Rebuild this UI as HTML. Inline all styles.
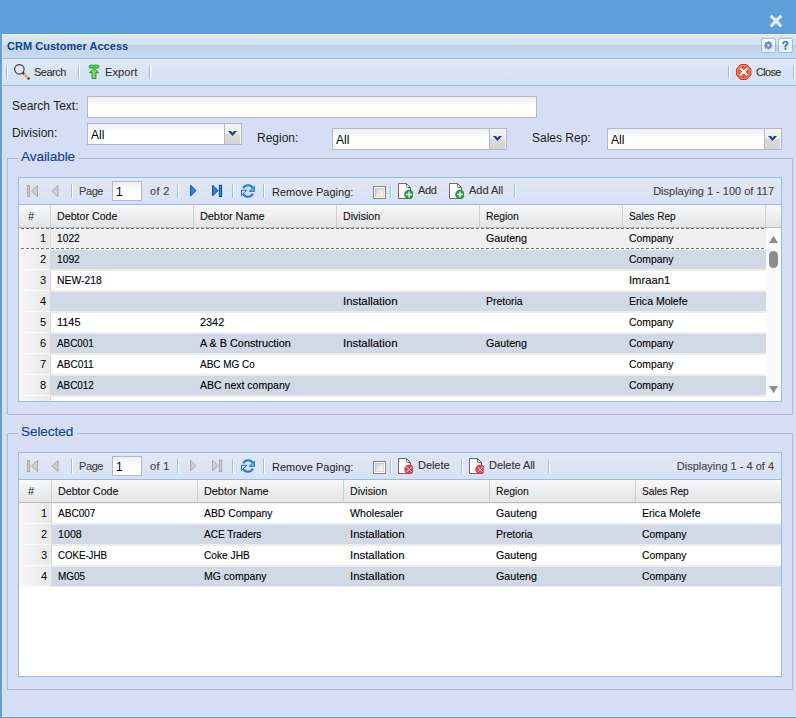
<!DOCTYPE html><html><head><meta charset="utf-8"><style>
html,body{margin:0;padding:0}
body{width:796px;height:718px;overflow:hidden;position:relative;background:#5fa0dc;font-family:"Liberation Sans",sans-serif}
div{position:absolute;box-sizing:border-box}
.t{white-space:pre;line-height:20px;height:20px}
.s{-webkit-text-stroke:0.12px currentColor}
</style></head><body>
<svg style="position:absolute;left:770px;top:15px" width="12" height="12" viewBox="0 0 12 12"><path d="M1.7 1.7L10.3 10.3M10.3 1.7L1.7 10.3" stroke="#e4eef8" stroke-width="3.1" stroke-linecap="round"/></svg>
<div style="left:2px;top:33px;width:794px;height:1px;background:#5796d8"></div>
<div style="left:2px;top:34px;width:794px;height:1px;background:#f4f8fc"></div>
<div style="left:2px;top:35px;width:794px;height:10px;background:linear-gradient(#dae6f4,#d3e1f2)"></div>
<div style="left:2px;top:45px;width:794px;height:1px;background:#bcd1ec"></div>
<div style="left:2px;top:46px;width:794px;height:12px;background:linear-gradient(#c2d5ee,#c8daf0)"></div>
<div style="left:2px;top:58px;width:794px;height:1px;background:#99bbe8"></div>
<div style="left:2px;top:59px;width:794px;height:26px;background:linear-gradient(#dfe8f5,#d5e2f2)"></div>
<div style="left:2px;top:85px;width:794px;height:1px;background:#99bbe8"></div>
<div style="left:2px;top:86px;width:794px;height:631px;background:#d6def5"></div>
<div style="left:2px;top:35px;width:1px;height:682px;background:#e0e6f8"></div>
<div style="left:2px;top:716px;width:794px;height:1px;background:#dde3f7"></div>
<div class="t" style="left:7px;top:36px;font-size:11px;color:#15428b;font-weight:bold;letter-spacing:0.03px;">CRM Customer Access</div>
<div style="left:761px;top:38px;width:15px;height:15px;border:1px solid #99bbe8;border-radius:2px;background:linear-gradient(#ffffff,#ffffff 45%,#dbe8f8 50%,#e8f1fb)"></div>
<div style="left:778px;top:38px;width:15px;height:15px;border:1px solid #99bbe8;border-radius:2px;background:linear-gradient(#ffffff,#ffffff 45%,#dbe8f8 50%,#e8f1fb)"></div>
<svg style="position:absolute;left:763px;top:40px" width="11" height="11" viewBox="0 0 11 11"><g fill="#7f87cd"><circle cx="5.3" cy="5.3" r="3.5"/><rect x="4.5" y="1.1" width="1.6" height="1.8" transform="rotate(0 5.3 5.3)"/><rect x="4.5" y="1.1" width="1.6" height="1.8" transform="rotate(45 5.3 5.3)"/><rect x="4.5" y="1.1" width="1.6" height="1.8" transform="rotate(90 5.3 5.3)"/><rect x="4.5" y="1.1" width="1.6" height="1.8" transform="rotate(135 5.3 5.3)"/><rect x="4.5" y="1.1" width="1.6" height="1.8" transform="rotate(180 5.3 5.3)"/><rect x="4.5" y="1.1" width="1.6" height="1.8" transform="rotate(225 5.3 5.3)"/><rect x="4.5" y="1.1" width="1.6" height="1.8" transform="rotate(270 5.3 5.3)"/><rect x="4.5" y="1.1" width="1.6" height="1.8" transform="rotate(315 5.3 5.3)"/></g><circle cx="5.3" cy="5.3" r="1.1" fill="#f4f6ff"/></svg>
<svg style="position:absolute;left:778px;top:38px" width="15" height="15" viewBox="0 0 15 15"><path d="M5.2 5.6Q5.2 3.6 7.4 3.6Q9.6 3.6 9.6 5.3Q9.6 6.3 8.5 6.9Q7.4 7.5 7.4 8.7" fill="none" stroke="#4b7bb3" stroke-width="1.9" stroke-linecap="round"/><circle cx="7.4" cy="10.9" r="1.05" fill="#4b7bb3"/></svg>
<div style="left:6px;top:65px;width:1px;height:14px;background:#98c0ec"></div>
<div style="left:7px;top:65px;width:1px;height:14px;background:#ffffff"></div>
<div style="left:78px;top:65px;width:1px;height:14px;background:#98c0ec"></div>
<div style="left:79px;top:65px;width:1px;height:14px;background:#ffffff"></div>
<div style="left:149px;top:65px;width:1px;height:14px;background:#98c0ec"></div>
<div style="left:150px;top:65px;width:1px;height:14px;background:#ffffff"></div>
<div style="left:728px;top:65px;width:1px;height:14px;background:#98c0ec"></div>
<div style="left:729px;top:65px;width:1px;height:14px;background:#ffffff"></div>
<div style="left:793px;top:65px;width:1px;height:14px;background:#98c0ec"></div>
<div style="left:794px;top:65px;width:1px;height:14px;background:#ffffff"></div>
<svg style="position:absolute;left:14px;top:64px" width="16" height="16" viewBox="0 0 16 16"><circle cx="5.4" cy="5.3" r="4.75" fill="#e5e7eb" stroke="#36466f" stroke-width="1.2"/><path d="M8.6 8.6L10.3 10.3" stroke="#36466f" stroke-width="2.4"/><path d="M10.1 10.1L14.2 14.2" stroke="#e8b466" stroke-width="2.8"/><path d="M14 14L15.2 15.2" stroke="#36466f" stroke-width="2.6"/></svg>
<div class="t s" style="left:34px;top:62px;font-size:11px;color:#333;font-weight:normal;letter-spacing:-0.5px;">Search</div>
<svg style="position:absolute;left:86px;top:64px" width="16" height="16" viewBox="0 0 16 16"><rect x="3.2" y="1.2" width="9.6" height="2.8" rx="1.2" fill="#5ccc5c" stroke="#239a23" stroke-width="1"/><path d="M8 4.6L12.6 8.6H9.9V14.4H6.1V8.6H3.4Z" fill="#78dc78" stroke="#239a23" stroke-width="1" stroke-linejoin="round"/></svg>
<div class="t s" style="left:105px;top:62px;font-size:11px;color:#333;font-weight:normal;letter-spacing:0.1px;">Export</div>
<svg style="position:absolute;left:736px;top:64px" width="16" height="16" viewBox="0 0 16 16"><path d="M4.6 0.5H10.4L15 5.1V10.9L10.4 15.5H4.6L0.5 10.9V5.1Z" fill="#e9583c" stroke="#c8401f" stroke-width="1"/><path d="M5 1.6H10L13.9 5.5V10.5L10 14.4H5L1.6 10.5V5.5Z" fill="none" stroke="#f7927a" stroke-width="0.9"/><path d="M4.9 4.9L10.6 10.6M10.6 4.9L4.9 10.6" stroke="#fff" stroke-width="2.1" stroke-linecap="square"/></svg>
<div class="t s" style="left:756px;top:62px;font-size:11px;color:#333;font-weight:normal;letter-spacing:-0.7px;">Close</div>
<div class="t" style="left:12px;top:96px;font-size:12px;color:#222;font-weight:normal;">Search Text:</div>
<div style="left:87px;top:96px;width:450px;height:22px;background:linear-gradient(#eceff0,#f7f8f8 5px,#fff 8px);border:1px solid #b5b8c8"></div>
<div class="t" style="left:12px;top:123px;font-size:12px;color:#222;font-weight:normal;">Division:</div>
<div style="left:87px;top:123px;width:155px;height:22px;background:linear-gradient(#eceff0,#f7f8f8 5px,#fff 8px);border:1px solid #b5b8c8"></div>
<div style="left:224px;top:123px;width:18px;height:22px;border:1px solid #b5b8c8;background:linear-gradient(#f3f3f3,#ececec 45%,#dadada 55%,#d4d4d4);border-radius:0 2px 2px 0"></div>
<div style="left:240px;top:124px;width:1px;height:20px;background:#f7f7f7"></div>
<svg style="position:absolute;left:228px;top:131px" width="9" height="6" viewBox="0 0 9 6"><path d="M0 0H3L4.5 2L6 0H9L4.5 5Z" fill="#1f3e87"/></svg>
<div class="t" style="left:91px;top:125px;font-size:12px;color:#000;font-weight:normal;">All</div>
<div class="t" style="left:257px;top:128px;font-size:12px;color:#222;font-weight:normal;">Region:</div>
<div style="left:332px;top:128px;width:175px;height:22px;background:linear-gradient(#eceff0,#f7f8f8 5px,#fff 8px);border:1px solid #b5b8c8"></div>
<div style="left:489px;top:128px;width:18px;height:22px;border:1px solid #b5b8c8;background:linear-gradient(#f3f3f3,#ececec 45%,#dadada 55%,#d4d4d4);border-radius:0 2px 2px 0"></div>
<div style="left:505px;top:129px;width:1px;height:20px;background:#f7f7f7"></div>
<svg style="position:absolute;left:493px;top:136px" width="9" height="6" viewBox="0 0 9 6"><path d="M0 0H3L4.5 2L6 0H9L4.5 5Z" fill="#1f3e87"/></svg>
<div class="t" style="left:336px;top:130px;font-size:12px;color:#000;font-weight:normal;">All</div>
<div class="t" style="left:532px;top:128px;font-size:12px;color:#222;font-weight:normal;">Sales Rep:</div>
<div style="left:607px;top:128px;width:175px;height:22px;background:linear-gradient(#eceff0,#f7f8f8 5px,#fff 8px);border:1px solid #b5b8c8"></div>
<div style="left:764px;top:128px;width:18px;height:22px;border:1px solid #b5b8c8;background:linear-gradient(#f3f3f3,#ececec 45%,#dadada 55%,#d4d4d4);border-radius:0 2px 2px 0"></div>
<div style="left:780px;top:129px;width:1px;height:20px;background:#f7f7f7"></div>
<svg style="position:absolute;left:768px;top:136px" width="9" height="6" viewBox="0 0 9 6"><path d="M0 0H3L4.5 2L6 0H9L4.5 5Z" fill="#1f3e87"/></svg>
<div class="t" style="left:611px;top:130px;font-size:12px;color:#000;font-weight:normal;">All</div>
<div style="left:7px;top:158px;width:786px;height:257px;border:1px solid #b5b8c8;border-top:none"></div>
<div style="left:7px;top:158px;width:11px;height:1px;background:#b5b8c8"></div>
<div style="left:78px;top:158px;width:715px;height:1px;background:#b5b8c8"></div>
<div style="left:7px;top:158px;width:1px;height:1px;background:#b5b8c8"></div>
<div class="t s" style="left:21px;top:147px;font-size:13.6px;color:#15428b;font-weight:normal;letter-spacing:-0.1px;">Available</div>
<div style="left:18px;top:177px;width:764px;height:28px;border:1px solid #99bbe8;background:linear-gradient(#dfe8f6,#d6e2f3)"></div>
<svg style="position:absolute;left:27px;top:185px" width="12" height="12" viewBox="0 0 12 12"><rect x="0.5" y="0.5" width="2" height="11" fill="#d0d0d0" stroke="#a9a9a9" stroke-width="1"/><path d="M10.5 0.5V11.5L4.5 6Z" fill="#cfcfcf" stroke="#a9a9a9" stroke-width="1" stroke-linejoin="round"/></svg>
<svg style="position:absolute;left:51px;top:185px" width="8" height="12" viewBox="0 0 8 12"><path d="M7 0.5V11.5L1 6Z" fill="#cfcfcf" stroke="#a9a9a9" stroke-width="1" stroke-linejoin="round"/></svg>
<div style="left:71px;top:184px;width:1px;height:14px;background:#98c0ec"></div>
<div style="left:72px;top:184px;width:1px;height:14px;background:#ffffff"></div>
<div class="t s" style="left:79px;top:181px;font-size:11px;color:#444;font-weight:normal;letter-spacing:-0.4px;">Page</div>
<div style="left:112px;top:181px;width:30px;height:20px;background:linear-gradient(#eceff0,#f7f8f8 5px,#fff 8px);border:1px solid #b5b8c8"></div>
<div class="t" style="left:116px;top:182px;font-size:12px;color:#000;font-weight:normal;">1</div>
<div class="t s" style="left:150px;top:181px;font-size:11px;color:#444;font-weight:normal;letter-spacing:0.35px;">of 2</div>
<div style="left:177px;top:184px;width:1px;height:14px;background:#98c0ec"></div>
<div style="left:178px;top:184px;width:1px;height:14px;background:#ffffff"></div>
<svg style="position:absolute;left:189px;top:184px" width="8" height="13" viewBox="0 0 8 13"><path d="M1.6 1.2V11.9L7 6.6Z" fill="#3b7be6" stroke="#1546ae" stroke-width="1" stroke-linejoin="round"/></svg>
<svg style="position:absolute;left:211px;top:184px" width="12" height="13" viewBox="0 0 12 13"><path d="M1.6 1.2V11.9L7 6.6Z" fill="#3b7be6" stroke="#1546ae" stroke-width="1" stroke-linejoin="round"/><rect x="8.4" y="1.3" width="2.2" height="11.2" fill="#3b7be6" stroke="#1546ae" stroke-width="1"/></svg>
<div style="left:232px;top:184px;width:1px;height:14px;background:#98c0ec"></div>
<div style="left:233px;top:184px;width:1px;height:14px;background:#ffffff"></div>
<svg style="position:absolute;left:240px;top:184px" width="16" height="16" viewBox="0 0 16 16"><path d="M3.2 4.4Q4.6 1.2 8 1.2Q11.2 1.2 12.6 3.8" fill="none" stroke="#2277e6" stroke-width="2.1"/><path d="M14.4 2.3V7.3H9.2Z" fill="#66b8fa" stroke="#1b6ad8" stroke-width="1" stroke-linejoin="round"/><path d="M12.8 9.6Q11.4 12.8 8 12.8Q4.8 12.8 3.4 10.2" fill="none" stroke="#2277e6" stroke-width="2.1"/><path d="M1.5 6.3V11.6L6.8 6.3Z" fill="#c2e4fd" stroke="#1b6ad8" stroke-width="1" stroke-linejoin="round"/></svg>
<div style="left:263px;top:184px;width:1px;height:14px;background:#98c0ec"></div>
<div style="left:264px;top:184px;width:1px;height:14px;background:#ffffff"></div>
<div class="t" style="left:272px;top:182px;font-size:11px;color:#222;font-weight:normal;">Remove Paging:</div>
<div style="left:373px;top:186px;width:13px;height:13px;border:1px solid #838383;background:#fff"></div>
<div style="left:375px;top:188px;width:9px;height:9px;border:1px solid #c3c7cf;border-right-color:#dcdcdc;border-bottom-color:#dcdcdc;background:linear-gradient(135deg,#c9cdd4,#eeeeef 60%,#f6f6f6)"></div>
<div style="left:390px;top:184px;width:1px;height:14px;background:#98c0ec"></div>
<div style="left:391px;top:184px;width:1px;height:14px;background:#ffffff"></div>
<svg style="position:absolute;left:397px;top:183px" width="16" height="16" viewBox="0 0 16 16"><path d="M1.5 0.5H9.5L13.5 4.5V15.5H1.5Z" fill="#fff" stroke="#6b6b6b" stroke-width="1"/><path d="M9.5 0.5V3.5Q9.5 4.5 10.5 4.5H13.5" fill="none" stroke="#6b6b6b" stroke-width="1"/><circle cx="12" cy="11.5" r="4.4" fill="#2e9a3e" stroke="#237a30" stroke-width="0.8"/><path d="M12 8.5V14.5M9 11.5H15" stroke="#fff" stroke-width="1.3"/></svg>
<div class="t s" style="left:418px;top:180px;font-size:11px;color:#333;font-weight:normal;letter-spacing:-0.3px;">Add</div>
<svg style="position:absolute;left:448px;top:183px" width="16" height="16" viewBox="0 0 16 16"><path d="M1.5 0.5H9.5L13.5 4.5V15.5H1.5Z" fill="#fff" stroke="#6b6b6b" stroke-width="1"/><path d="M9.5 0.5V3.5Q9.5 4.5 10.5 4.5H13.5" fill="none" stroke="#6b6b6b" stroke-width="1"/><circle cx="12" cy="11.5" r="4.4" fill="#2e9a3e" stroke="#237a30" stroke-width="0.8"/><path d="M12 8.5V14.5M9 11.5H15" stroke="#fff" stroke-width="1.3"/></svg>
<div class="t s" style="left:469px;top:180px;font-size:11px;color:#333;font-weight:normal;">Add All</div>
<div style="left:514px;top:184px;width:1px;height:14px;background:#98c0ec"></div>
<div style="left:515px;top:184px;width:1px;height:14px;background:#ffffff"></div>
<div class="t s" style="left:0px;top:181px;font-size:11px;color:#444;font-weight:normal;left:auto;right:22px">Displaying 1 - 100 of 117</div>
<div style="left:7px;top:433px;width:786px;height:257px;border:1px solid #b5b8c8;border-top:none"></div>
<div style="left:7px;top:433px;width:11px;height:1px;background:#b5b8c8"></div>
<div style="left:77px;top:433px;width:716px;height:1px;background:#b5b8c8"></div>
<div style="left:7px;top:433px;width:1px;height:1px;background:#b5b8c8"></div>
<div class="t s" style="left:21px;top:422px;font-size:13.6px;color:#15428b;font-weight:normal;letter-spacing:-0.1px;">Selected</div>
<div style="left:18px;top:452px;width:764px;height:28px;border:1px solid #99bbe8;background:linear-gradient(#dfe8f6,#d6e2f3)"></div>
<svg style="position:absolute;left:27px;top:460px" width="12" height="12" viewBox="0 0 12 12"><rect x="0.5" y="0.5" width="2" height="11" fill="#d0d0d0" stroke="#a9a9a9" stroke-width="1"/><path d="M10.5 0.5V11.5L4.5 6Z" fill="#cfcfcf" stroke="#a9a9a9" stroke-width="1" stroke-linejoin="round"/></svg>
<svg style="position:absolute;left:51px;top:460px" width="8" height="12" viewBox="0 0 8 12"><path d="M7 0.5V11.5L1 6Z" fill="#cfcfcf" stroke="#a9a9a9" stroke-width="1" stroke-linejoin="round"/></svg>
<div style="left:71px;top:459px;width:1px;height:14px;background:#98c0ec"></div>
<div style="left:72px;top:459px;width:1px;height:14px;background:#ffffff"></div>
<div class="t s" style="left:79px;top:456px;font-size:11px;color:#444;font-weight:normal;letter-spacing:-0.4px;">Page</div>
<div style="left:112px;top:456px;width:30px;height:20px;background:linear-gradient(#eceff0,#f7f8f8 5px,#fff 8px);border:1px solid #b5b8c8"></div>
<div class="t" style="left:116px;top:457px;font-size:12px;color:#000;font-weight:normal;">1</div>
<div class="t s" style="left:150px;top:456px;font-size:11px;color:#444;font-weight:normal;letter-spacing:0.35px;">of 1</div>
<div style="left:177px;top:459px;width:1px;height:14px;background:#98c0ec"></div>
<div style="left:178px;top:459px;width:1px;height:14px;background:#ffffff"></div>
<svg style="position:absolute;left:189px;top:459px" width="8" height="13" viewBox="0 0 8 13"><path d="M1.6 1.2V11.9L7 6.6Z" fill="#cfcfcf" stroke="#a9a9a9" stroke-width="1" stroke-linejoin="round"/></svg>
<svg style="position:absolute;left:211px;top:459px" width="12" height="13" viewBox="0 0 12 13"><path d="M1.6 1.2V11.9L7 6.6Z" fill="#cfcfcf" stroke="#a9a9a9" stroke-width="1" stroke-linejoin="round"/><rect x="8.4" y="1.3" width="2.2" height="11.2" fill="#d0d0d0" stroke="#a9a9a9" stroke-width="1"/></svg>
<div style="left:232px;top:459px;width:1px;height:14px;background:#98c0ec"></div>
<div style="left:233px;top:459px;width:1px;height:14px;background:#ffffff"></div>
<svg style="position:absolute;left:240px;top:459px" width="16" height="16" viewBox="0 0 16 16"><path d="M3.2 4.4Q4.6 1.2 8 1.2Q11.2 1.2 12.6 3.8" fill="none" stroke="#2277e6" stroke-width="2.1"/><path d="M14.4 2.3V7.3H9.2Z" fill="#66b8fa" stroke="#1b6ad8" stroke-width="1" stroke-linejoin="round"/><path d="M12.8 9.6Q11.4 12.8 8 12.8Q4.8 12.8 3.4 10.2" fill="none" stroke="#2277e6" stroke-width="2.1"/><path d="M1.5 6.3V11.6L6.8 6.3Z" fill="#c2e4fd" stroke="#1b6ad8" stroke-width="1" stroke-linejoin="round"/></svg>
<div style="left:263px;top:459px;width:1px;height:14px;background:#98c0ec"></div>
<div style="left:264px;top:459px;width:1px;height:14px;background:#ffffff"></div>
<div class="t" style="left:272px;top:457px;font-size:11px;color:#222;font-weight:normal;">Remove Paging:</div>
<div style="left:373px;top:461px;width:13px;height:13px;border:1px solid #838383;background:#fff"></div>
<div style="left:375px;top:463px;width:9px;height:9px;border:1px solid #c3c7cf;border-right-color:#dcdcdc;border-bottom-color:#dcdcdc;background:linear-gradient(135deg,#c9cdd4,#eeeeef 60%,#f6f6f6)"></div>
<div style="left:390px;top:459px;width:1px;height:14px;background:#98c0ec"></div>
<div style="left:391px;top:459px;width:1px;height:14px;background:#ffffff"></div>
<svg style="position:absolute;left:397px;top:458px" width="16" height="16" viewBox="0 0 16 16"><path d="M1.5 0.5H9.5L13.5 4.5V15.5H1.5Z" fill="#fff" stroke="#6b6b6b" stroke-width="1"/><path d="M9.5 0.5V3.5Q9.5 4.5 10.5 4.5H13.5" fill="none" stroke="#6b6b6b" stroke-width="1"/><circle cx="12.2" cy="11.5" r="4.5" fill="#ea4450" stroke="#c43242" stroke-width="0.8"/><path d="M10 9.3L14.4 13.7M14.4 9.3L10 13.7" stroke="#fff" stroke-width="1"/></svg>
<div class="t s" style="left:418px;top:455px;font-size:11px;color:#333;font-weight:normal;letter-spacing:-0.05px;">Delete</div>
<div style="left:461px;top:459px;width:1px;height:14px;background:#98c0ec"></div>
<div style="left:462px;top:459px;width:1px;height:14px;background:#ffffff"></div>
<svg style="position:absolute;left:468px;top:458px" width="16" height="16" viewBox="0 0 16 16"><path d="M1.5 0.5H9.5L13.5 4.5V15.5H1.5Z" fill="#fff" stroke="#6b6b6b" stroke-width="1"/><path d="M9.5 0.5V3.5Q9.5 4.5 10.5 4.5H13.5" fill="none" stroke="#6b6b6b" stroke-width="1"/><circle cx="12.2" cy="11.5" r="4.5" fill="#ea4450" stroke="#c43242" stroke-width="0.8"/><path d="M10 9.3L14.4 13.7M14.4 9.3L10 13.7" stroke="#fff" stroke-width="1"/></svg>
<div class="t s" style="left:489px;top:455px;font-size:11px;color:#333;font-weight:normal;letter-spacing:-0.05px;">Delete All</div>
<div style="left:548px;top:459px;width:1px;height:14px;background:#98c0ec"></div>
<div style="left:549px;top:459px;width:1px;height:14px;background:#ffffff"></div>
<div class="t s" style="left:0px;top:456px;font-size:11px;color:#444;font-weight:normal;left:auto;right:22px">Displaying 1 - 4 of 4</div>
<div style="left:18px;top:205px;width:1px;height:197px;background:#99bbe8"></div>
<div style="left:781px;top:205px;width:1px;height:197px;background:#99bbe8"></div>
<div style="left:18px;top:401px;width:764px;height:1px;background:#99bbe8"></div>
<div style="left:19px;top:228px;width:762px;height:173px;background:#fff"></div>
<div style="left:19px;top:205px;width:762px;height:23px;background:linear-gradient(#f9f9f9,#e3e4e6);border-bottom:1px solid #bdbdbd"></div>
<div class="t" style="left:28px;top:206px;font-size:11px;color:#222;font-weight:normal;">#</div>
<div class="t s" style="left:57px;top:206px;font-size:11px;color:#111;font-weight:normal;transform:scaleX(0.969);transform-origin:0 0;">Debtor Code</div>
<div class="t s" style="left:200px;top:206px;font-size:11px;color:#111;font-weight:normal;transform:scaleX(0.986);transform-origin:0 0;">Debtor Name</div>
<div class="t s" style="left:343px;top:206px;font-size:11px;color:#111;font-weight:normal;transform:scaleX(0.964);transform-origin:0 0;">Division</div>
<div class="t s" style="left:486px;top:206px;font-size:11px;color:#111;font-weight:normal;transform:scaleX(0.938);transform-origin:0 0;">Region</div>
<div class="t s" style="left:629px;top:206px;font-size:11px;color:#111;font-weight:normal;transform:scaleX(0.92);transform-origin:0 0;">Sales Rep</div>
<div style="left:50px;top:205px;width:1px;height:22px;background:#d0d0d0"></div>
<div style="left:193px;top:205px;width:1px;height:22px;background:#d0d0d0"></div>
<div style="left:336px;top:205px;width:1px;height:22px;background:#d0d0d0"></div>
<div style="left:479px;top:205px;width:1px;height:22px;background:#d0d0d0"></div>
<div style="left:622px;top:205px;width:1px;height:22px;background:#d0d0d0"></div>
<div style="left:765px;top:205px;width:1px;height:22px;background:#d0d0d0"></div>
<div style="left:0;top:0;width:796px;height:401px;overflow:hidden">
<div style="left:51px;top:228px;width:715px;height:21px;background:#efefef"></div>
<div style="left:51px;top:228px;width:715px;height:1px;background:#ededed"></div>
<div style="left:51px;top:248px;width:715px;height:1px;background:#ededed"></div>
<div style="left:19px;top:228px;width:31px;height:21px;background:linear-gradient(90deg,#f6f6f6,#e9e9e9)"></div>
<div style="left:19px;top:248px;width:31px;height:1px;background:#fafafa"></div>
<div style="left:50px;top:228px;width:1px;height:21px;background:#dcdcdc"></div>
<div class="t" style="left:0px;top:228px;font-size:11px;color:#000;font-weight:normal;width:46px;text-align:right">1</div>
<div class="t s" style="left:57px;top:228px;font-size:11px;color:#000;font-weight:normal;transform:scaleX(0.932);transform-origin:0 0;">1022</div>
<div class="t s" style="left:486px;top:228px;font-size:11px;color:#000;font-weight:normal;transform:scaleX(0.97);transform-origin:0 0;">Gauteng</div>
<div class="t s" style="left:629px;top:228px;font-size:11px;color:#000;font-weight:normal;transform:scaleX(0.942);transform-origin:0 0;">Company</div>
<div style="left:19px;top:228px;width:747px;height:1px;background:repeating-linear-gradient(90deg,#fbfbfb 0 2px,#747474 2px 5px)"></div>
<div style="left:19px;top:248px;width:747px;height:1px;background:repeating-linear-gradient(90deg,#fbfbfb 0 2px,#747474 2px 5px)"></div>
<div style="left:51px;top:249px;width:715px;height:21px;background:#d1d9e6"></div>
<div style="left:51px;top:249px;width:715px;height:1px;background:#ededed"></div>
<div style="left:51px;top:269px;width:715px;height:1px;background:#ededed"></div>
<div style="left:19px;top:249px;width:31px;height:21px;background:linear-gradient(90deg,#f6f6f6,#e9e9e9)"></div>
<div style="left:19px;top:269px;width:31px;height:1px;background:#fafafa"></div>
<div style="left:50px;top:249px;width:1px;height:21px;background:#dcdcdc"></div>
<div class="t" style="left:0px;top:249px;font-size:11px;color:#000;font-weight:normal;width:46px;text-align:right">2</div>
<div class="t s" style="left:57px;top:249px;font-size:11px;color:#000;font-weight:normal;transform:scaleX(0.932);transform-origin:0 0;">1092</div>
<div class="t s" style="left:629px;top:249px;font-size:11px;color:#000;font-weight:normal;transform:scaleX(0.942);transform-origin:0 0;">Company</div>
<div style="left:51px;top:270px;width:715px;height:21px;background:#ffffff"></div>
<div style="left:51px;top:270px;width:715px;height:1px;background:#ededed"></div>
<div style="left:51px;top:290px;width:715px;height:1px;background:#ededed"></div>
<div style="left:19px;top:270px;width:31px;height:21px;background:linear-gradient(90deg,#f6f6f6,#e9e9e9)"></div>
<div style="left:19px;top:290px;width:31px;height:1px;background:#fafafa"></div>
<div style="left:50px;top:270px;width:1px;height:21px;background:#dcdcdc"></div>
<div class="t" style="left:0px;top:270px;font-size:11px;color:#000;font-weight:normal;width:46px;text-align:right">3</div>
<div class="t s" style="left:57px;top:270px;font-size:11px;color:#000;font-weight:normal;transform:scaleX(0.944);transform-origin:0 0;">NEW-218</div>
<div class="t s" style="left:629px;top:270px;font-size:11px;color:#000;font-weight:normal;transform:scaleX(1.019);transform-origin:0 0;">Imraan1</div>
<div style="left:51px;top:291px;width:715px;height:21px;background:#d1d9e6"></div>
<div style="left:51px;top:291px;width:715px;height:1px;background:#ededed"></div>
<div style="left:51px;top:311px;width:715px;height:1px;background:#ededed"></div>
<div style="left:19px;top:291px;width:31px;height:21px;background:linear-gradient(90deg,#f6f6f6,#e9e9e9)"></div>
<div style="left:19px;top:311px;width:31px;height:1px;background:#fafafa"></div>
<div style="left:50px;top:291px;width:1px;height:21px;background:#dcdcdc"></div>
<div class="t" style="left:0px;top:291px;font-size:11px;color:#000;font-weight:normal;width:46px;text-align:right">4</div>
<div class="t s" style="left:343px;top:291px;font-size:11px;color:#000;font-weight:normal;transform:scaleX(1.036);transform-origin:0 0;">Installation</div>
<div class="t s" style="left:486px;top:291px;font-size:11px;color:#000;font-weight:normal;transform:scaleX(0.952);transform-origin:0 0;">Pretoria</div>
<div class="t s" style="left:629px;top:291px;font-size:11px;color:#000;font-weight:normal;transform:scaleX(0.957);transform-origin:0 0;">Erica Molefe</div>
<div style="left:51px;top:312px;width:715px;height:21px;background:#ffffff"></div>
<div style="left:51px;top:312px;width:715px;height:1px;background:#ededed"></div>
<div style="left:51px;top:332px;width:715px;height:1px;background:#ededed"></div>
<div style="left:19px;top:312px;width:31px;height:21px;background:linear-gradient(90deg,#f6f6f6,#e9e9e9)"></div>
<div style="left:19px;top:332px;width:31px;height:1px;background:#fafafa"></div>
<div style="left:50px;top:312px;width:1px;height:21px;background:#dcdcdc"></div>
<div class="t" style="left:0px;top:312px;font-size:11px;color:#000;font-weight:normal;width:46px;text-align:right">5</div>
<div class="t s" style="left:57px;top:312px;font-size:11px;color:#000;font-weight:normal;transform:scaleX(0.994);transform-origin:0 0;">1145</div>
<div class="t s" style="left:200px;top:312px;font-size:11px;color:#000;font-weight:normal;transform:scaleX(0.99);transform-origin:0 0;">2342</div>
<div class="t s" style="left:629px;top:312px;font-size:11px;color:#000;font-weight:normal;transform:scaleX(0.942);transform-origin:0 0;">Company</div>
<div style="left:51px;top:333px;width:715px;height:21px;background:#d1d9e6"></div>
<div style="left:51px;top:333px;width:715px;height:1px;background:#ededed"></div>
<div style="left:51px;top:353px;width:715px;height:1px;background:#ededed"></div>
<div style="left:19px;top:333px;width:31px;height:21px;background:linear-gradient(90deg,#f6f6f6,#e9e9e9)"></div>
<div style="left:19px;top:353px;width:31px;height:1px;background:#fafafa"></div>
<div style="left:50px;top:333px;width:1px;height:21px;background:#dcdcdc"></div>
<div class="t" style="left:0px;top:333px;font-size:11px;color:#000;font-weight:normal;width:46px;text-align:right">6</div>
<div class="t s" style="left:57px;top:333px;font-size:11px;color:#000;font-weight:normal;transform:scaleX(0.896);transform-origin:0 0;">ABC001</div>
<div class="t s" style="left:200px;top:333px;font-size:11px;color:#000;font-weight:normal;transform:scaleX(0.983);transform-origin:0 0;">A &amp; B Construction</div>
<div class="t s" style="left:343px;top:333px;font-size:11px;color:#000;font-weight:normal;transform:scaleX(1.036);transform-origin:0 0;">Installation</div>
<div class="t s" style="left:486px;top:333px;font-size:11px;color:#000;font-weight:normal;transform:scaleX(0.97);transform-origin:0 0;">Gauteng</div>
<div class="t s" style="left:629px;top:333px;font-size:11px;color:#000;font-weight:normal;transform:scaleX(0.942);transform-origin:0 0;">Company</div>
<div style="left:51px;top:354px;width:715px;height:21px;background:#ffffff"></div>
<div style="left:51px;top:354px;width:715px;height:1px;background:#ededed"></div>
<div style="left:51px;top:374px;width:715px;height:1px;background:#ededed"></div>
<div style="left:19px;top:354px;width:31px;height:21px;background:linear-gradient(90deg,#f6f6f6,#e9e9e9)"></div>
<div style="left:19px;top:374px;width:31px;height:1px;background:#fafafa"></div>
<div style="left:50px;top:354px;width:1px;height:21px;background:#dcdcdc"></div>
<div class="t" style="left:0px;top:354px;font-size:11px;color:#000;font-weight:normal;width:46px;text-align:right">7</div>
<div class="t s" style="left:57px;top:354px;font-size:11px;color:#000;font-weight:normal;transform:scaleX(0.914);transform-origin:0 0;">ABC011</div>
<div class="t s" style="left:200px;top:354px;font-size:11px;color:#000;font-weight:normal;transform:scaleX(0.906);transform-origin:0 0;">ABC MG Co</div>
<div class="t s" style="left:629px;top:354px;font-size:11px;color:#000;font-weight:normal;transform:scaleX(0.942);transform-origin:0 0;">Company</div>
<div style="left:51px;top:375px;width:715px;height:21px;background:#d1d9e6"></div>
<div style="left:51px;top:375px;width:715px;height:1px;background:#ededed"></div>
<div style="left:51px;top:395px;width:715px;height:1px;background:#ededed"></div>
<div style="left:19px;top:375px;width:31px;height:21px;background:linear-gradient(90deg,#f6f6f6,#e9e9e9)"></div>
<div style="left:19px;top:395px;width:31px;height:1px;background:#fafafa"></div>
<div style="left:50px;top:375px;width:1px;height:21px;background:#dcdcdc"></div>
<div class="t" style="left:0px;top:375px;font-size:11px;color:#000;font-weight:normal;width:46px;text-align:right">8</div>
<div class="t s" style="left:57px;top:375px;font-size:11px;color:#000;font-weight:normal;transform:scaleX(0.896);transform-origin:0 0;">ABC012</div>
<div class="t s" style="left:200px;top:375px;font-size:11px;color:#000;font-weight:normal;transform:scaleX(0.956);transform-origin:0 0;">ABC next company</div>
<div class="t s" style="left:629px;top:375px;font-size:11px;color:#000;font-weight:normal;transform:scaleX(0.942);transform-origin:0 0;">Company</div>
<div style="left:51px;top:396px;width:715px;height:21px;background:#ffffff"></div>
<div style="left:51px;top:396px;width:715px;height:1px;background:#ededed"></div>
<div style="left:51px;top:416px;width:715px;height:1px;background:#ededed"></div>
<div style="left:19px;top:396px;width:31px;height:21px;background:linear-gradient(90deg,#f6f6f6,#e9e9e9)"></div>
<div style="left:19px;top:416px;width:31px;height:1px;background:#fafafa"></div>
<div style="left:50px;top:396px;width:1px;height:21px;background:#dcdcdc"></div>
<div class="t" style="left:0px;top:396px;font-size:11px;color:#000;font-weight:normal;width:46px;text-align:right">9</div>
</div>
<div style="left:766px;top:228px;width:15px;height:173px;background:#fafafa"></div>
<svg style="position:absolute;left:769px;top:236px" width="9" height="7" viewBox="0 0 9 7"><path d="M4.5 0L9 7H0Z" fill="#8a8a8a"/></svg>
<div style="left:769px;top:251px;width:9px;height:17px;background:#8c8c8c;border-radius:4.5px"></div>
<svg style="position:absolute;left:769px;top:386px" width="9" height="7" viewBox="0 0 9 7"><path d="M0 0H9L4.5 7Z" fill="#8a8a8a"/></svg>
<div style="left:18px;top:480px;width:1px;height:197px;background:#99bbe8"></div>
<div style="left:781px;top:480px;width:1px;height:197px;background:#99bbe8"></div>
<div style="left:18px;top:676px;width:764px;height:1px;background:#99bbe8"></div>
<div style="left:19px;top:503px;width:762px;height:173px;background:#fff"></div>
<div style="left:19px;top:480px;width:762px;height:23px;background:linear-gradient(#f9f9f9,#e3e4e6);border-bottom:1px solid #bdbdbd"></div>
<div class="t" style="left:28px;top:481px;font-size:11px;color:#222;font-weight:normal;">#</div>
<div class="t s" style="left:58px;top:481px;font-size:11px;color:#111;font-weight:normal;transform:scaleX(0.969);transform-origin:0 0;">Debtor Code</div>
<div class="t s" style="left:204px;top:481px;font-size:11px;color:#111;font-weight:normal;transform:scaleX(0.986);transform-origin:0 0;">Debtor Name</div>
<div class="t s" style="left:350px;top:481px;font-size:11px;color:#111;font-weight:normal;transform:scaleX(0.964);transform-origin:0 0;">Division</div>
<div class="t s" style="left:496px;top:481px;font-size:11px;color:#111;font-weight:normal;transform:scaleX(0.938);transform-origin:0 0;">Region</div>
<div class="t s" style="left:642px;top:481px;font-size:11px;color:#111;font-weight:normal;transform:scaleX(0.92);transform-origin:0 0;">Sales Rep</div>
<div style="left:51px;top:480px;width:1px;height:22px;background:#d0d0d0"></div>
<div style="left:197px;top:480px;width:1px;height:22px;background:#d0d0d0"></div>
<div style="left:343px;top:480px;width:1px;height:22px;background:#d0d0d0"></div>
<div style="left:489px;top:480px;width:1px;height:22px;background:#d0d0d0"></div>
<div style="left:635px;top:480px;width:1px;height:22px;background:#d0d0d0"></div>
<div style="left:0;top:0;width:796px;height:676px;overflow:hidden">
<div style="left:52px;top:503px;width:729px;height:21px;background:#ffffff"></div>
<div style="left:52px;top:503px;width:729px;height:1px;background:#ededed"></div>
<div style="left:52px;top:523px;width:729px;height:1px;background:#ededed"></div>
<div style="left:19px;top:503px;width:32px;height:21px;background:linear-gradient(90deg,#f6f6f6,#e9e9e9)"></div>
<div style="left:19px;top:523px;width:32px;height:1px;background:#fafafa"></div>
<div style="left:51px;top:503px;width:1px;height:21px;background:#dcdcdc"></div>
<div class="t" style="left:0px;top:503px;font-size:11px;color:#000;font-weight:normal;width:47px;text-align:right">1</div>
<div class="t s" style="left:58px;top:503px;font-size:11px;color:#000;font-weight:normal;transform:scaleX(0.913);transform-origin:0 0;">ABC007</div>
<div class="t s" style="left:204px;top:503px;font-size:11px;color:#000;font-weight:normal;transform:scaleX(0.942);transform-origin:0 0;">ABD Company</div>
<div class="t s" style="left:350px;top:503px;font-size:11px;color:#000;font-weight:normal;transform:scaleX(0.963);transform-origin:0 0;">Wholesaler</div>
<div class="t s" style="left:496px;top:503px;font-size:11px;color:#000;font-weight:normal;transform:scaleX(0.97);transform-origin:0 0;">Gauteng</div>
<div class="t s" style="left:642px;top:503px;font-size:11px;color:#000;font-weight:normal;transform:scaleX(0.957);transform-origin:0 0;">Erica Molefe</div>
<div style="left:52px;top:524px;width:729px;height:21px;background:#d1d9e6"></div>
<div style="left:52px;top:524px;width:729px;height:1px;background:#ededed"></div>
<div style="left:52px;top:544px;width:729px;height:1px;background:#ededed"></div>
<div style="left:19px;top:524px;width:32px;height:21px;background:linear-gradient(90deg,#f6f6f6,#e9e9e9)"></div>
<div style="left:19px;top:544px;width:32px;height:1px;background:#fafafa"></div>
<div style="left:51px;top:524px;width:1px;height:21px;background:#dcdcdc"></div>
<div class="t" style="left:0px;top:524px;font-size:11px;color:#000;font-weight:normal;width:47px;text-align:right">2</div>
<div class="t s" style="left:58px;top:524px;font-size:11px;color:#000;font-weight:normal;transform:scaleX(0.973);transform-origin:0 0;">1008</div>
<div class="t s" style="left:204px;top:524px;font-size:11px;color:#000;font-weight:normal;transform:scaleX(0.911);transform-origin:0 0;">ACE Traders</div>
<div class="t s" style="left:350px;top:524px;font-size:11px;color:#000;font-weight:normal;transform:scaleX(1.036);transform-origin:0 0;">Installation</div>
<div class="t s" style="left:496px;top:524px;font-size:11px;color:#000;font-weight:normal;transform:scaleX(0.952);transform-origin:0 0;">Pretoria</div>
<div class="t s" style="left:642px;top:524px;font-size:11px;color:#000;font-weight:normal;transform:scaleX(0.942);transform-origin:0 0;">Company</div>
<div style="left:52px;top:545px;width:729px;height:21px;background:#ffffff"></div>
<div style="left:52px;top:545px;width:729px;height:1px;background:#ededed"></div>
<div style="left:52px;top:565px;width:729px;height:1px;background:#ededed"></div>
<div style="left:19px;top:545px;width:32px;height:21px;background:linear-gradient(90deg,#f6f6f6,#e9e9e9)"></div>
<div style="left:19px;top:565px;width:32px;height:1px;background:#fafafa"></div>
<div style="left:51px;top:545px;width:1px;height:21px;background:#dcdcdc"></div>
<div class="t" style="left:0px;top:545px;font-size:11px;color:#000;font-weight:normal;width:47px;text-align:right">3</div>
<div class="t s" style="left:58px;top:545px;font-size:11px;color:#000;font-weight:normal;transform:scaleX(0.879);transform-origin:0 0;">COKE-JHB</div>
<div class="t s" style="left:204px;top:545px;font-size:11px;color:#000;font-weight:normal;transform:scaleX(0.925);transform-origin:0 0;">Coke JHB</div>
<div class="t s" style="left:350px;top:545px;font-size:11px;color:#000;font-weight:normal;transform:scaleX(1.036);transform-origin:0 0;">Installation</div>
<div class="t s" style="left:496px;top:545px;font-size:11px;color:#000;font-weight:normal;transform:scaleX(0.97);transform-origin:0 0;">Gauteng</div>
<div class="t s" style="left:642px;top:545px;font-size:11px;color:#000;font-weight:normal;transform:scaleX(0.942);transform-origin:0 0;">Company</div>
<div style="left:52px;top:566px;width:729px;height:21px;background:#d1d9e6"></div>
<div style="left:52px;top:566px;width:729px;height:1px;background:#ededed"></div>
<div style="left:52px;top:586px;width:729px;height:1px;background:#ededed"></div>
<div style="left:19px;top:566px;width:32px;height:21px;background:linear-gradient(90deg,#f6f6f6,#e9e9e9)"></div>
<div style="left:19px;top:586px;width:32px;height:1px;background:#fafafa"></div>
<div style="left:51px;top:566px;width:1px;height:21px;background:#dcdcdc"></div>
<div class="t" style="left:0px;top:566px;font-size:11px;color:#000;font-weight:normal;width:47px;text-align:right">4</div>
<div class="t s" style="left:58px;top:566px;font-size:11px;color:#000;font-weight:normal;transform:scaleX(0.905);transform-origin:0 0;">MG05</div>
<div class="t s" style="left:204px;top:566px;font-size:11px;color:#000;font-weight:normal;transform:scaleX(0.956);transform-origin:0 0;">MG company</div>
<div class="t s" style="left:350px;top:566px;font-size:11px;color:#000;font-weight:normal;transform:scaleX(1.036);transform-origin:0 0;">Installation</div>
<div class="t s" style="left:496px;top:566px;font-size:11px;color:#000;font-weight:normal;transform:scaleX(0.97);transform-origin:0 0;">Gauteng</div>
<div class="t s" style="left:642px;top:566px;font-size:11px;color:#000;font-weight:normal;transform:scaleX(0.942);transform-origin:0 0;">Company</div>
</div>
</body></html>
